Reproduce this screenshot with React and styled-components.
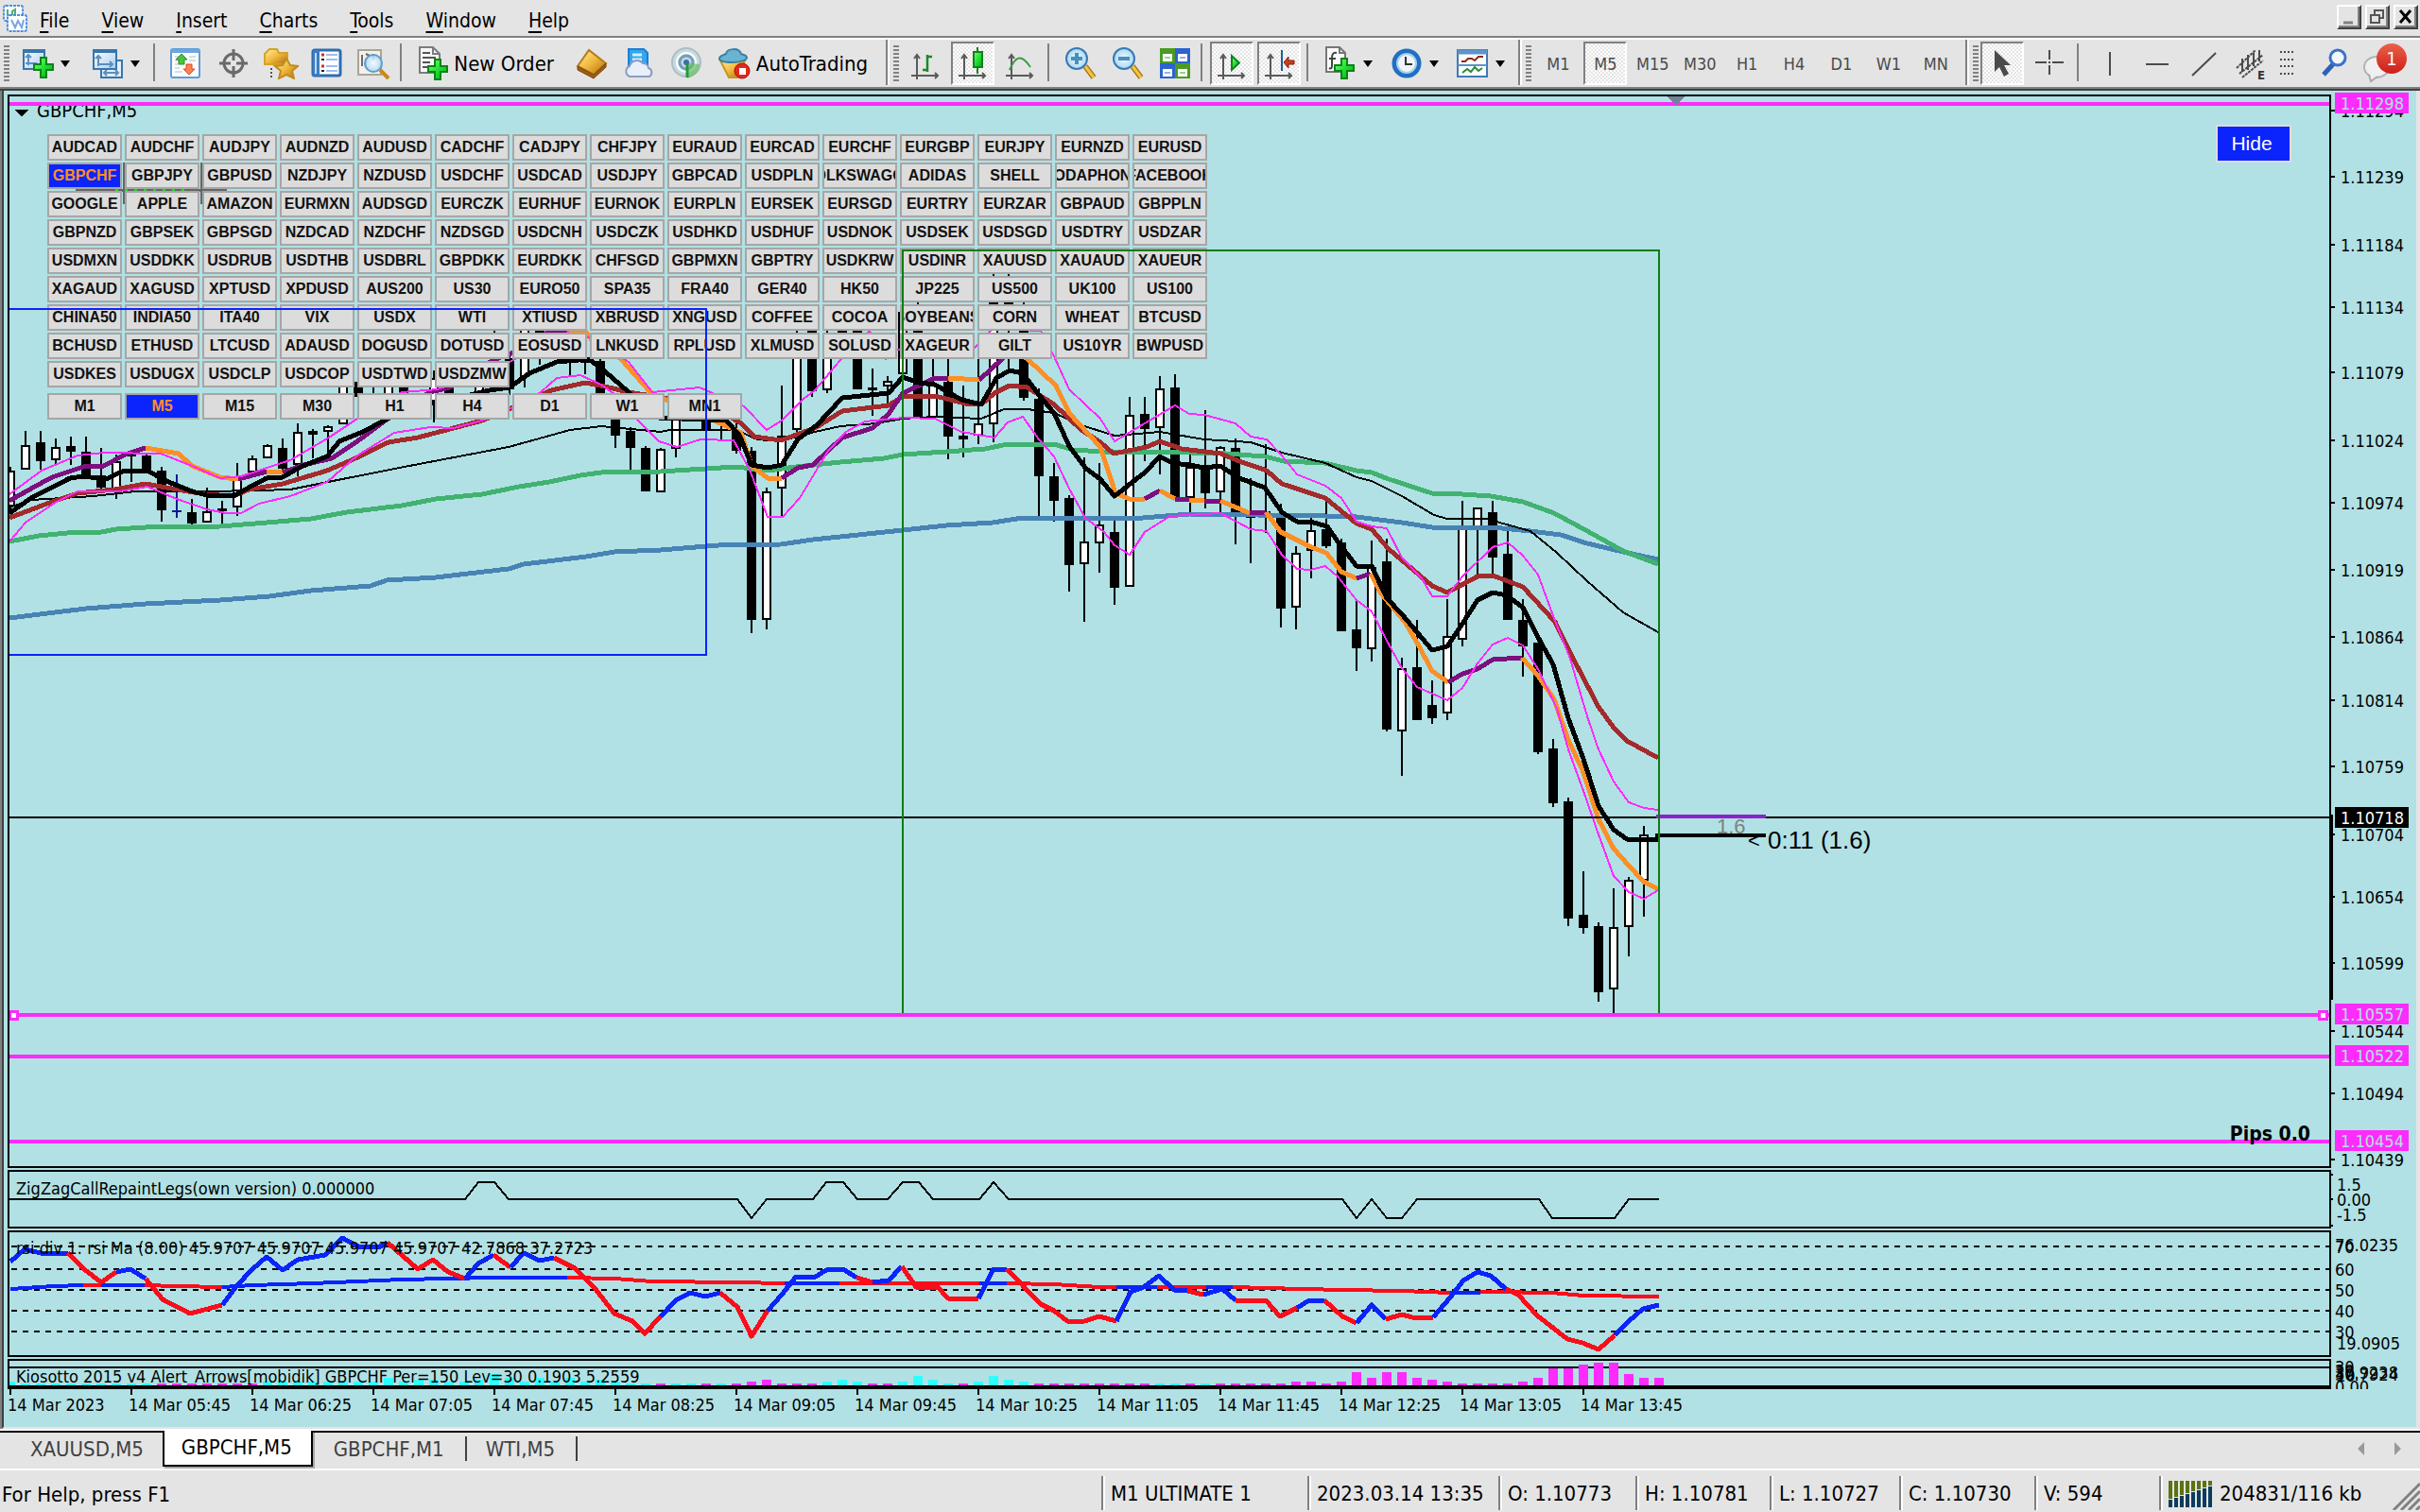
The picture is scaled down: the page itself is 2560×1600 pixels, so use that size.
import React from "react";
import styled, { createGlobalStyle, css } from "styled-components";

const C = {
  face: "#e4e4e4",
  shade: "#808080",
  dark: "#404040",
  chart: "#b1e1e4",
  magenta: "#fd2bfc",
  blue: "#0b24fb",
  cyan: "#2dffff",
  orange: "#fd8f25",
  purple: "#7d0f7f",
  brown: "#a32b2d",
  seagreen: "#41b270",
  steel: "#4883b5",
  green: "#107c12",
  red: "#fb0d1b",
};

const ui = `"DejaVu Sans Condensed", "DejaVu Sans", sans-serif`;
const arial = `"Liberation Sans", Arial, sans-serif`;

const Global = createGlobalStyle`
  * { box-sizing: border-box; }
  body { margin: 0; background: ${C.face}; font-family: ${ui}; color: #000; }
  button { font: inherit; color: inherit; border: 0; padding: 0; background: none; border-radius: 0; }
  svg { display: block; flex: none; }
`;

/* ---------- frame ---------- */
const Page = styled.div`
  display: flex;
  flex-direction: column;
  min-height: 100vh;
  overflow: hidden;
`;

const MenuBar = styled.nav`
  display: flex;
  align-items: center;
  height: 42px;
  padding: 0 2px;
  font-size: 21px;
  border-bottom: 2px solid #fff;
  box-shadow: inset 0 -2px 0 ${C.shade};
`;
const MenuList = styled.div`
  display: flex;
  gap: 34px;
  margin-left: 12px;
  padding-top: 4px;
  flex: 1;
`;
const MenuItem = styled.button`
  line-height: 30px;
  u { text-underline-offset: 4px; text-decoration-thickness: 2px; }
`;
const WindowButtons = styled.div`
  display: flex;
  gap: 4px;
  padding-bottom: 5px;
`;
const WindowButton = styled.button`
  width: 26px;
  height: 26px;
  display: grid;
  place-items: center;
  border: 2px solid;
  border-color: #fff ${C.dark} ${C.dark} #fff;
  box-shadow: inset -2px -2px 0 ${C.shade};
`;

/* ---------- toolbar ---------- */
const ToolBar = styled.div`
  display: flex;
  align-items: stretch;
  height: 54px;
  font-size: 22px;
  border-bottom: 2px solid ${C.dark};
  box-shadow: inset 0 -2px 0 ${C.shade};
  padding: 0 6px 2px 4px;
`;
const Grip = styled.span`
  width: 6px;
  margin: 6px ${(p) => p.$after || 6}px 6px 0;
  background: repeating-linear-gradient(${C.shade} 0 2px, transparent 2px 4px);
`;
const Sep = styled.span`
  width: 2px;
  margin: 4px 8px 6px 2px;
  background: ${C.shade};
`;
const Break = styled.span`
  width: 4px;
  margin: 0 4px 2px;
  background: linear-gradient(90deg, ${C.shade} 50%, #fff 50%);
`;
const Tool = styled.button`
  width: ${(p) => p.$w || 50}px;
  display: flex;
  align-items: center;
  justify-content: center;
  gap: 7px;
  white-space: nowrap;
`;
const LabelTool = styled(Tool)`
  width: ${(p) => p.$w}px;
  justify-content: flex-start;
  padding-left: 8px;
  gap: 5px;
`;
const pressed = css`
  border: 2px solid;
  border-color: ${C.shade} #fff #fff ${C.shade};
  background: repeating-conic-gradient(#fff 0 25%, ${C.face} 0 50%) 0 0 / 4px 4px;
`;
const Toggle = styled(Tool)`
  width: 46px;
  margin: 2px 4px 0 0;
  height: 46px;
  ${(p) => p.$on && pressed}
`;
const Period = styled(Toggle)`
  font-size: 18px;
  color: #4b4b4b;
`;
const Caret = styled.span`
  border: 5px solid transparent;
  border-top: 7px solid #000;
  border-bottom: 0;
`;
const RightTool = styled(Tool)`
  margin-left: auto;
`;

/* ---------- chart ---------- */
const ChartWindow = styled.main`
  flex: 1;
  display: flex;
  flex-direction: column;
  gap: 2px;
  background: ${C.chart};
  border-left: 2px solid ${C.dark};
  box-shadow: -2px 0 0 ${C.shade};
  margin-left: 2px;
  margin-right: 2px;
  padding: 4px 0 0 4px;
  border-bottom: 2px solid ${C.face};
  border-right: 2px solid ${C.face};
`;
const PaneRow = styled.section`
  display: flex;
  ${(p) => (p.$h ? `height: ${p.$h}px;` : "flex: 1 1 1136px; min-height: 0;")}
`;
const Plot = styled.div`
  position: relative;
  flex: 1;
  min-width: 0;
  overflow: hidden;
  border: 2px solid #000;
  border-bottom-width: ${(p) => p.$base || 2}px;
`;
const Scale = styled.svg`
  width: 90px;
  height: 100%;
  font: 18px ${ui};
  overflow: ${(p) => (p.$clip ? "hidden" : "visible")};
`;
const Canvas = styled.svg`
  width: 100%;
  height: 100%;
  font: 18px ${ui};
`;
const Overlay = styled(Canvas)`
  position: absolute;
  inset: 0;
  pointer-events: none;
`;
const TimeScale = styled.svg`
  width: 100%;
  height: 40px;
  margin-top: -2px;
  font: 18px ${ui};
`;
const SymbolPanel = styled.div`
  position: absolute;
  left: 40px;
  top: 40px;
  display: grid;
  grid-template-columns: repeat(15, 80px);
  grid-auto-rows: 28px;
  gap: 2px;
  font: bold 16px ${arial};
`;
const PeriodPanel = styled(SymbolPanel)`
  top: 314px;
`;
const SymbolButton = styled.button`
  display: flex;
  align-items: center;
  justify-content: center;
  overflow: hidden;
  white-space: nowrap;
  margin: 0 1px 0 0;
  border: 2px solid #a6a6a6;
  background: ${(p) => (p.$on ? C.blue : "#dcdcdc")};
  color: ${(p) => (p.$on ? C.orange : "#111")};
`;
const HideButton = styled.button`
  position: absolute;
  right: 40px;
  top: 30px;
  width: 80px;
  height: 40px;
  padding-right: 4px;
  border: 2px solid #dcdcdc;
  background: ${C.blue};
  color: #fff;
  font: 21px ${arial};
`;

/* ---------- bottom ---------- */
const TabBar = styled.div`
  display: flex;
  align-items: stretch;
  height: 44px;
  border-top: 2px solid #fff;
  border-bottom: 2px solid #fff;
  box-shadow: inset 0 2px 0 #000;
  font-size: 22px;
  padding: 0 16px 2px 2px;
`;
const Tab = styled.button`
  margin: 6px 0 6px 0;
  padding: 0 22px 0 ${(p) => p.$lead || 20}px;
  line-height: 28px;
  color: ${C.dark};
  border-right: ${(p) => (p.$line ? `2px solid ${C.dark}` : "0")};
`;
const FirstTab = styled(Tab)`
  padding-right: 20px;
`;
const ActiveTab = styled(Tab)`
  margin: 0;
  padding: 0 20px 0 18px;
  color: #000;
  background: #fff;
  border: 2px solid #000;
  border-top: 0;
  box-shadow: 2px 2px 0 #a8a8a8;
`;
const TabArrows = styled.div`
  display: flex;
  gap: 30px;
  align-items: center;
  margin-left: auto;
  padding-right: 4px;
`;
const StatusBar = styled.footer`
  display: flex;
  align-items: stretch;
  height: 44px;
  padding: 6px 0 2px 2px;
  font-size: 22px;
  line-height: 40px;
  white-space: nowrap;
`;
const Help = styled.span`
  flex: 1;
`;
const Cell = styled.span`
  width: ${(p) => p.$w}px;
  display: flex;
  align-items: center;
  gap: 8px;
  padding: 2px 0 0 8px;
  border-left: 2px solid ${C.shade};
  box-shadow: inset 2px 0 0 #fff;
`;
const Resize = styled.svg`
  margin-left: auto;
  align-self: flex-end;
`;

/* ---------- icons ---------- */
const Icon = ({ children, w = 34, h = 34, ...r }) => (
  <svg width={w} height={h} viewBox={`0 0 ${w} ${h}`} fill="none" aria-hidden="true" {...r}>
    {children}
  </svg>
);
const HiddenDefs = styled.svg`
  position: absolute;
`;
const Defs = () => (
  <HiddenDefs width="0" height="0" aria-hidden="true">
    <defs>
      <linearGradient id="gGreen" x1="0" y1="0" x2="1" y2="1">
        <stop offset="0" stopColor="#8dff7a" /><stop offset=".5" stopColor="#1fe032" /><stop offset="1" stopColor="#0aa51a" />
      </linearGradient>
      <linearGradient id="gGold" x1="0" y1="0" x2="1" y2="1">
        <stop offset="0" stopColor="#fff0a0" /><stop offset=".5" stopColor="#f0b93c" /><stop offset="1" stopColor="#a8690f" />
      </linearGradient>
      <linearGradient id="gBlue" x1="0" y1="0" x2="1" y2="1">
        <stop offset="0" stopColor="#fff" /><stop offset="1" stopColor="#a9cdee" />
      </linearGradient>
      <radialGradient id="gLens">
        <stop offset="0" stopColor="#f4fbff" /><stop offset="1" stopColor="#a6d8f5" />
      </radialGradient>
      <linearGradient id="gRed" x1="0" y1="0" x2="0" y2="1">
        <stop offset="0" stopColor="#ea6149" /><stop offset="1" stopColor="#cf1d17" />
      </linearGradient>
    </defs>
  </HiddenDefs>
);
const Plus = ({ x, y }) => (
  <path transform={`translate(${x} ${y})`} d="M8 1h6v7h7v6h-7v8H8v-8H1V8h7z" fill="url(#gGreen)" stroke="#0b8416" strokeWidth="2" />
);
const Axes = () => (
  <path d="M6 4v26M0 26h28M3 8l3-4 3 4M25 23l3 3-3 3" stroke="#5a5a5a" strokeWidth="2" />
);
const IcApp = () => (
  <Icon w={28} h={30}>
    <rect x="2" y="1" width="20" height="16" rx="2" fill="#f8fbff" stroke="#4f8fe0" strokeWidth="2" strokeDasharray="3 1" />
    <path d="M6 12V5m5 7V7l3-2v7" stroke="#4fae74" strokeWidth="2" />
    <rect x="6" y="11" width="20" height="17" rx="2" fill="#fff" stroke="#4f8fe0" strokeWidth="2" strokeDasharray="3 1" />
    <path d="M10 16l4 8 3-7 4 7 2-8" stroke="#7aa5e0" strokeWidth="2" />
  </Icon>
);
const IcNewChart = () => (
  <Icon>
    <rect x="2" y="3" width="22" height="20" fill="url(#gBlue)" stroke="#3776ae" strokeWidth="2" />
    <path d="M1 4h24" stroke="#3776ae" strokeWidth="4" />
    <path d="M7 9v10M4 11l3-3 3 3M4 17h12" stroke="#5d90bd" strokeWidth="2" />
    <Plus x={12} y={10} />
  </Icon>
);
const IcProfiles = () => (
  <Icon>
    <rect x="10" y="14" width="22" height="18" fill="#e3effa" stroke="#3776ae" strokeWidth="2" />
    <path d="M14 27h14m-12-3-3 3 3 3m9-6 3 3-3 3" stroke="#5d90bd" strokeWidth="2" />
    <rect x="2" y="3" width="24" height="20" fill="url(#gBlue)" stroke="#3776ae" strokeWidth="2" />
    <path d="M1 4h26" stroke="#3776ae" strokeWidth="4" />
    <path d="M7 9v11M4 12l3-3 3 3M6 18h16m-3-3 3 3-3 3" stroke="#5d90bd" strokeWidth="2" />
  </Icon>
);
const IcMarket = () => (
  <Icon>
    <rect x="1" y="2" width="30" height="30" rx="2" fill="#fbfdff" stroke="#5f9bd8" strokeWidth="2" />
    <path d="M1 4h30" stroke="#6aa6e2" strokeWidth="4" />
    <path d="M5 10h4m-4 4h4m11 0h7M5 18h4m11-8h7M5 26h8m-8-4h5" stroke="#d6dce6" strokeWidth="2" />
    <path d="M12 7l6 6h-3v5h-6v-5H6z" fill="#4ac23d" stroke="#2c8f22" />
    <path d="M20 29l-6-6h3v-5h6v5h3z" fill="#ff7f55" stroke="#d9491c" />
  </Icon>
);
const IcCross = () => (
  <Icon>
    <circle cx="17" cy="17" r="10" stroke="#6a6a6a" strokeWidth="3" />
    <path d="M17 2v12m0 6v12M2 17h12m6 0h12" stroke="#6a6a6a" strokeWidth="3" />
  </Icon>
);
const IcNavigator = () => (
  <Icon w={38}>
    <path d="M2 7l5-5h8l2 4h9v12H2z" fill="url(#gGold)" stroke="#d5a32b" strokeWidth="2" />
    <path d="M9 22v10" stroke="#555" strokeWidth="2" strokeDasharray="2 2" />
    <path d="M25 12l4 7 8 1-6 5 2 8-8-4-8 4 2-8-6-5 8-1z" fill="url(#gGold)" stroke="#c08c1c" strokeWidth="2" />
  </Icon>
);
const IcTerminal = () => (
  <Icon>
    <rect x="2" y="3" width="29" height="27" rx="2" fill="#fff" stroke="#2d6db2" strokeWidth="3" />
    <rect x="2" y="3" width="7" height="27" fill="#3d7cc0" />
    <path d="M5 6v22" stroke="#b8d8f4" strokeWidth="2" />
    <path d="M11 8h3m-3 12h3" stroke="#e0252c" strokeWidth="3" />
    <path d="M16 8h12M16 13h12M16 20h12M16 25h12" stroke="#9fbdf0" strokeWidth="2" />
    <path d="M11 13h3m-3 12h3" stroke="#222" strokeWidth="2" />
  </Icon>
);
const IcTester = () => (
  <Icon w={38}>
    <rect x="2" y="3" width="24" height="26" fill="#f3f1ea" stroke="#a8a595" strokeWidth="2" />
    <path d="M6 8v12m4-8v9m8-14v6m-8-6l4 2" stroke="#6c6c6c" strokeWidth="2" />
    <circle cx="18" cy="17" r="9" fill="url(#gLens)" fillOpacity=".85" stroke="#5e9bd0" strokeWidth="2" />
    <path d="M25 24l9 9" stroke="#c98a17" strokeWidth="4" />
  </Icon>
);
const IcOrder = () => (
  <Icon h={38}>
    <path d="M3 2h14l7 7v20H3z" fill="#f7f7f7" stroke="#7b7b7b" strokeWidth="2" />
    <path d="M17 2v7h7" stroke="#7b7b7b" strokeWidth="2" />
    <path d="M6 8h8M6 13h14M6 18h8M6 23h6" stroke="#555" strokeWidth="2" />
    <Plus x={11} y={14} />
  </Icon>
);
const IcMeta = () => (
  <Icon>
    <path d="M2 20L14 3l18 14-13 12z" fill="url(#gGold)" stroke="#b5791a" strokeWidth="2" />
    <path d="M2 20v4l17 9 13-12v-4L19 29z" fill="#9a5d12" stroke="#7d470a" />
  </Icon>
);
const IcCloud = () => (
  <Icon>
    <path d="M6 2h16l4 4v16H6z" fill="#35a6f0" stroke="#1c7fd0" strokeWidth="2" />
    <path d="M10 8h10M10 13h10" stroke="#d6f0ff" strokeWidth="3" />
    <path d="M7 31a6 6 0 010-11 8 8 0 0114-3 6 6 0 016 5 5 5 0 011 9z" fill="#e9effa" stroke="#8b9cc2" strokeWidth="2" />
  </Icon>
);
const IcSignal = () => (
  <Icon>
    <circle cx="17" cy="16" r="15" fill="#cbd9dc" stroke="#a9bfc6" strokeWidth="2" />
    <circle cx="17" cy="16" r="10" stroke="#fff" strokeWidth="2" />
    <circle cx="17" cy="16" r="7" stroke="#6f9fc0" strokeWidth="3" />
    <path d="M18 16v17c8-2 13-8 13-15" fill="#66bf63" fillOpacity=".7" />
    <circle cx="17" cy="16" r="3" fill="#3b6eae" />
    <path d="M18 18v14" stroke="#25983a" strokeWidth="3" />
  </Icon>
);
const IcAuto = () => (
  <Icon w={36}>
    <path d="M3 14h26l-8 18h-9z" fill="url(#gGold)" stroke="#c99424" strokeWidth="2" />
    <path d="M2 12c0-3 5-4 7-5 1-6 14-7 16 0 2 1 6 1 6 4s-8 5-15 5-14-1-14-4z" fill="#6cb2d4" stroke="#38819f" strokeWidth="2" />
    <circle cx="26" cy="25" r="8" fill="#df2a1d" stroke="#b21209" />
    <rect x="23" y="22" width="7" height="7" fill="#fff" />
  </Icon>
);
const IcBars = () => (
  <Icon>
    <g transform="translate(2 4)"><Axes /><path d="M17 4v18M17 6h5M12 20h5" stroke="#1a8a26" strokeWidth="2.5" /></g>
  </Icon>
);
const IcCandles = () => (
  <Icon>
    <g transform="translate(2 4)"><Axes /></g>
    <path d="M22 0v28" stroke="#11821c" strokeWidth="2" /><rect x="18" y="5" width="9" height="16" fill="url(#gGreen)" stroke="#11821c" strokeWidth="2" />
  </Icon>
);
const IcLine = () => (
  <Icon>
    <g transform="translate(2 4)"><Axes /><path d="M4 20c6-14 12-18 22-3" stroke="#3a9a40" strokeWidth="2" /></g>
  </Icon>
);
const IcZoom = ({ plus }) => (
  <Icon>
    <path d="M22 20l9 12" stroke="#a87616" strokeWidth="6" /><path d="M22 20l9 12" stroke="#f1c645" strokeWidth="3" />
    <circle cx="13" cy="12" r="11" fill="url(#gLens)" stroke="#3a78b5" strokeWidth="2" />
    <path d={plus ? "M13 6v12M7 12h12" : "M7 12h12"} stroke="#4a8fbd" strokeWidth="4" />
  </Icon>
);
const IcTile = () => (
  <Icon>
    {[[1, 1, "#4b9a26"], [17, 1, "#2c63cf"], [1, 17, "#2c63cf"], [17, 17, "#4b9a26"]].map(([x, y, f]) => (
      <g key={`${x}-${y}`}><rect x={x} y={y} width="16" height="16" fill={f} /><rect x={x + 3} y={y + 6} width="10" height="8" fill="#fff" /><path d={`M${x + 5} ${y + 10}h6`} stroke={f} strokeOpacity=".5" strokeWidth="2" /></g>
    ))}
  </Icon>
);
const IcShift = ({ auto }) => (
  <Icon>
    <g transform="translate(2 4)"><Axes /></g>
    {auto ? <path d="M17 9v15l8-7.500z" fill="url(#gGreen)" stroke="#11821c" strokeWidth="2" /> : <path d="M20 3v22" stroke="#1b5f96" strokeWidth="2" />}
    {!auto && <path d="M22 16l5-6v4h6v4h-6v4z" fill="#c6401a" stroke="#8b1f08" />}
  </Icon>
);
const IcIndicator = () => (
  <Icon h={38}>
    <path d="M2 2h14l6 6v20H2z" fill="#fcfcfc" stroke="#777" strokeWidth="2" />
    <path d="M16 2v6h6" stroke="#777" strokeWidth="2" />
    <path d="M13 8c-4-1-5 2-5 5v9c0 2-1 3-3 2M5 14h7" stroke="#444" strokeWidth="2" />
    <Plus x={10} y={13} />
  </Icon>
);
const IcClock = () => (
  <Icon>
    <circle cx="17" cy="17" r="13" fill="#eef5fb" stroke="#1f6fc4" strokeWidth="5" />
    <circle cx="17" cy="17" r="10" stroke="#a5cdec" strokeWidth="2" />
    <path d="M16 10v8h7" stroke="#333" strokeWidth="2" />
  </Icon>
);
const IcTemplate = () => (
  <Icon>
    <rect x="1" y="3" width="31" height="28" fill="#fff" stroke="#3b7ab8" strokeWidth="2" />
    <path d="M1 5h31" stroke="#5b95cc" strokeWidth="5" />
    <path d="M1 19h31" stroke="#5b95cc" strokeWidth="2" />
    <path d="M5 15h4l3-3h4l3 2 4-4h5" stroke="#8c2a12" strokeWidth="2" />
    <path d="M6 27l5-4 4 3 4-5 4 4 4-3" stroke="#2b8a33" strokeWidth="2" />
  </Icon>
);
const IcCursor = () => <Icon><path d="M9 3v23l5-5 5 10 5-3-5-9h7z" fill="#4b4b4b" /></Icon>;
const IcCrosshair = () => <Icon><path d="M17 3v10m0 6v10M2 16h12m6 0h12M16 16h2" stroke="#4b4b4b" strokeWidth="2" /></Icon>;
const IcV = () => <Icon><path d="M17 5v25" stroke="#4b4b4b" strokeWidth="2" /></Icon>;
const IcH = () => <Icon><path d="M5 18h24" stroke="#4b4b4b" strokeWidth="2" /></Icon>;
const IcTrend = () => <Icon><path d="M5 30L30 6" stroke="#4b4b4b" strokeWidth="2" /></Icon>;
const IcChannel = () => (
  <Icon>
    <path d="M2 22L22 3M5 28L30 8M8 32L30 14" stroke="#4b4b4b" strokeWidth="2" strokeDasharray="3 1" />
    <path d="M8 12v14M14 8v16M20 6v14M26 3v12" stroke="#4b4b4b" strokeWidth="2" />
    <text x="24" y="34" fontSize="13" fontWeight="bold" fill="#333">E</text>
  </Icon>
);
const IcFibo = () => <Icon><path d="M3 5h16M3 13h16M3 20h16M3 28h16" stroke="#4b4b4b" strokeWidth="2" strokeDasharray="2 2" /></Icon>;
const IcSearch = () => (
  <Icon w={28}>
    <path d="M12 18L2 29" stroke="#2b62b8" strokeWidth="5" />
    <circle cx="17" cy="11" r="8" fill="#f2f7ff" stroke="#3b72c8" strokeWidth="3" />
  </Icon>
);
const IcBell = () => (
  <Icon w={48} h={44}>
    <ellipse cx="14" cy="26" rx="13" ry="11" fill="#f0f0f2" stroke="#b3b3b3" strokeWidth="2" />
    <path d="M6 34l2 7 7-5" fill="#eee" stroke="#aaa" strokeWidth="2" />
    <circle cx="30" cy="17" r="16" fill="url(#gRed)" />
    <text x="30" y="24" textAnchor="middle" fontSize="20" fill="#fff">1</text>
  </Icon>
);

/* ---------- chart data ---------- */
// x of a bar on the time axis
const bx = (i) => 11 + 16 * i;

// [bar, high, body top, body bottom, low, bull?]
const candles = [
  [0, 494, 498, 536, 540, 1], [1, 456, 471, 497, 497, 1], [2, 456, 468, 488, 497, 0], [3, 464, 473, 487, 492, 1],
  [4, 462, 472, 478, 492, 0], [5, 462, 478, 503, 504, 0], [6, 474, 503, 516, 518, 0], [7, 481, 488, 519, 528, 1],
  [8, 482, 481, 483, 510, 0], [9, 480, 482, 499, 499, 0], [10, 494, 498, 540, 552, 0], [12, 528, 542, 554, 556, 0],
  [13, 516, 541, 553, 553, 1], [14, 530, 538, 541, 554, 0], [15, 490, 504, 537, 546, 1], [16, 482, 485, 500, 502, 1],
  [17, 470, 471, 485, 485, 1], [18, 464, 474, 496, 500, 0], [19, 448, 457, 492, 504, 1], [20, 454, 456, 460, 485, 0],
  [21, 450, 451, 457, 480, 1], [22, 400, 404, 449, 449, 1], [23, 400, 404, 420, 427, 0], [24, 404, 420, 424, 428, 0],
  [25, 395, 398, 430, 430, 1], [26, 402, 405, 430, 430, 0], [28, 392, 400, 425, 447, 1], [29, 402, 405, 430, 430, 0],
  [31, 390, 396, 430, 430, 1], [32, 348, 380, 384, 400, 0], [33, 375, 379, 412, 418, 0], [34, 340, 346, 399, 410, 1],
  [35, 340, 350, 372, 386, 0], [37, 350, 355, 372, 398, 0], [38, 352, 380, 384, 396, 0], [39, 378, 382, 430, 436, 0],
  [40, 420, 426, 461, 474, 0], [41, 452, 456, 474, 498, 0], [42, 472, 474, 520, 520, 0], [43, 474, 475, 521, 521, 1],
  [44, 430, 440, 475, 484, 1], [46, 428, 436, 454, 454, 0], [47, 430, 444, 446, 467, 0], [48, 440, 455, 477, 480, 0],
  [49, 473, 477, 656, 670, 0], [50, 516, 520, 656, 666, 1], [51, 408, 461, 517, 547, 1], [52, 340, 360, 455, 458, 1],
  [53, 340, 350, 414, 420, 0], [54, 345, 360, 413, 416, 1], [55, 340, 350, 352, 360, 0], [56, 330, 350, 412, 412, 0],
  [57, 390, 410, 413, 440, 0], [58, 398, 403, 409, 430, 1], [59, 320, 330, 396, 398, 1], [60, 318, 350, 443, 443, 0],
  [61, 360, 407, 442, 442, 1], [62, 370, 404, 462, 486, 0], [63, 408, 461, 465, 484, 1], [64, 370, 448, 461, 470, 1],
  [65, 290, 320, 449, 468, 1], [66, 290, 320, 324, 392, 0], [67, 320, 340, 421, 424, 0], [68, 411, 422, 504, 546, 0],
  [69, 490, 504, 530, 552, 0], [70, 524, 527, 598, 626, 0], [71, 484, 573, 597, 658, 1], [72, 490, 555, 575, 606, 1],
  [73, 550, 563, 622, 640, 0], [74, 420, 439, 621, 621, 1], [75, 420, 438, 454, 488, 0], [76, 398, 411, 453, 502, 1],
  [77, 396, 410, 527, 527, 0], [78, 480, 494, 527, 542, 1], [79, 434, 494, 522, 538, 0], [80, 472, 473, 521, 543, 1],
  [81, 464, 474, 547, 576, 0], [82, 506, 546, 548, 596, 0], [83, 470, 541, 543, 564, 0], [84, 533, 547, 644, 664, 0],
  [85, 578, 585, 643, 666, 1], [86, 548, 561, 583, 612, 1], [87, 530, 560, 578, 580, 0], [88, 570, 574, 668, 668, 0],
  [89, 636, 666, 686, 710, 0], [90, 572, 600, 687, 700, 1], [91, 570, 594, 772, 774, 0], [92, 696, 707, 774, 821, 1],
  [93, 656, 706, 762, 762, 0], [94, 720, 746, 760, 766, 0], [95, 634, 673, 755, 762, 1], [96, 530, 558, 677, 684, 1],
  [97, 537, 537, 561, 608, 1], [98, 530, 542, 590, 608, 0], [99, 562, 586, 656, 656, 0], [100, 634, 656, 684, 716, 0],
  [101, 680, 680, 796, 798, 0], [102, 782, 792, 850, 854, 0], [103, 844, 848, 972, 980, 0], [104, 922, 968, 982, 988, 0],
  [105, 976, 980, 1050, 1060, 0], [106, 940, 981, 1047, 1072, 1], [107, 928, 931, 981, 1012, 1], [108, 874, 883, 932, 970, 1],
];

const greenMa = "10,573 41,567 71,564 107,563 123,560 154,558 233,557 282,553 329,549 367,542 425,535 461,528 510,523 549,515 581,510 614,503 636,500 699,499 730,497 779,494 812,498 842,494 889,489 935,485 955,481 1001,478 1042,475 1066,470 1115,470 1135,476 1184,479 1225,478 1297,480 1338,483 1358,488 1401,490 1435,498 1451,500 1469,507 1515,522 1547,523 1577,525 1611,531 1644,543 1681,563 1717,583 1754,597";
const steelMa = "10,654 58,648 91,644 154,639 233,635 285,631 329,625 392,620 409,614 461,611 538,602 554,597 620,589 650,584 699,582 760,577 826,576 860,571 889,568 955,561 1001,556 1050,553 1082,548 1209,548 1258,544 1402,546 1435,547 1483,553 1515,558 1579,558 1619,562 1651,566 1679,575 1717,584 1754,592";
const blackMa = "10,543 33,527 74,506 88,504 112,507 129,499 156,498 176,509 203,520 219,524 247,525 263,516 282,506 299,505 318,494 346,483 359,467 384,457 406,445 440,430 480,422 518,413 539,410 560,395 589,383 623,380 640,393 665,415 697,442 768,445 782,460 795,492 812,495 827,492 844,465 864,450 891,421 940,416 955,399 972,405 989,407 1017,423 1038,428 1054,400 1068,392 1082,395 1099,418 1115,437 1131,472 1148,495 1164,507 1179,525 1211,500 1227,483 1240,490 1258,492 1274,495 1291,493 1311,506 1338,516 1356,542 1372,552 1386,552 1404,557 1415,573 1435,599 1451,599 1467,633 1483,650 1515,688 1531,684 1547,660 1563,635 1579,627 1594,630 1611,643 1629,678 1643,703 1659,760 1675,803 1691,853 1707,878 1721,888 1754,888";
const brownMa = "10,548 55,531 82,522 121,518 154,512 176,516 217,523 247,525 263,518 299,512 346,498 376,485 411,468 442,463 510,445 550,428 583,413 619,405 640,409 665,415 720,424 760,434 784,448 798,462 826,466 862,453 891,435 940,429 956,419 989,419 1021,427 1038,428 1052,416 1068,408 1087,410 1115,428 1144,455 1164,468 1178,480 1213,473 1227,467 1250,475 1291,480 1311,488 1340,498 1356,512 1402,527 1435,554 1451,560 1469,581 1515,620 1531,627 1563,610 1579,609 1611,621 1645,658 1659,687 1691,748 1707,770 1721,784 1754,802";
const thinMa = "10,537 33,529 99,525 143,520 217,520 274,519 307,518 362,507 433,493 538,473 603,455 636,451 699,457 708,455 779,455 801,465 825,467 862,457 889,451 927,448 955,443 989,441 1038,443 1062,433 1087,433 1115,437 1144,450 1179,461 1227,457 1274,465 1323,468 1356,479 1402,490 1435,505 1451,509 1483,525 1517,545 1531,549 1572,549 1619,562 1647,585 1679,615 1717,648 1754,669";
const bandUp = "10,523 44,498 82,482 110,479 170,480 203,493 233,506 255,504 307,487 348,463 378,443 425,415 463,412 541,382 600,352 623,357 665,383 690,415 740,410 787,430 811,455 827,445 850,422 862,413 889,381 920,350 937,380 949,370 1031,368 1050,348 1101,350 1115,377 1131,412 1164,443 1179,467 1211,448 1243,429 1258,438 1274,439 1307,448 1323,462 1340,465 1356,482 1372,502 1402,514 1419,527 1435,552 1451,557 1467,559 1483,590 1504,612 1515,631 1531,631 1547,610 1579,579 1595,574 1611,588 1627,608 1645,657 1661,697 1679,758 1691,793 1707,827 1723,849 1739,855 1754,857";
const bandLow = "10,573 27,553 58,532 82,520 126,520 156,515 187,528 219,539 239,543 255,543 274,533 307,525 346,510 378,482 417,458 455,452 480,453 510,445 545,430 572,415 589,400 614,397 636,407 650,417 675,445 697,467 716,473 741,465 776,466 793,497 812,547 828,547 846,527 876,477 895,457 915,446 956,442 989,443 1017,457 1052,463 1066,447 1082,441 1099,465 1115,483 1131,517 1148,548 1168,563 1179,577 1195,587 1211,563 1238,546 1291,543 1323,560 1340,562 1356,587 1372,602 1386,603 1402,599 1415,610 1435,635 1451,647 1467,678 1483,707 1499,727 1531,741 1547,728 1563,702 1579,682 1595,675 1611,683 1627,708 1647,750 1659,793 1675,837 1691,883 1707,927 1723,944 1739,951 1754,942";

const P = C.purple;
const O = C.orange;
const hull = [
  [P, "10,530 33,517 55,505 91,493 110,493 132,481 154,474"],
  [O, "154,474 189,480 203,493 233,505 252,507"],
  [P, "252,507 282,499"],
  [O, "282,499 299,500"],
  [P, "299,500 321,492 351,485 378,467 409,444 455,415 476,410 522,381 543,373 583,350 600,350"],
  [O, "600,350 619,350 626,360 657,380 688,415 730,435 760,447 784,458 795,493 812,506 827,506"],
  [P, "827,506 844,495 860,492 891,463 923,453 940,438 955,416 989,400 1003,400"],
  [O, "1003,400 1036,402"],
  [P, "1036,402 1060,380 1070,368"],
  [O, "1070,368 1087,380 1117,408 1131,437 1164,473 1180,522 1195,528 1211,528"],
  [P, "1211,528 1227,519"],
  [O, "1227,519 1243,528"],
  [P, "1243,528 1258,529"],
  [O, "1258,529 1274,530"],
  [P, "1274,530 1291,530"],
  [O, "1291,530 1322,543"],
  [P, "1322,543 1339,542"],
  [O, "1339,542 1355,563 1387,579 1403,585 1419,605 1435,612"],
  [P, "1435,612 1450,607"],
  [O, "1450,607 1461,628 1486,658 1499,680 1515,710 1532,722"],
  [P, "1532,722 1547,713 1563,708 1579,698 1610,696"],
  [O, "1610,696 1627,715 1644,740 1659,783 1675,817 1691,867 1707,898 1723,916 1739,933 1754,941"],
];

const B = C.blue;
const R = C.red;
const rsi = [
  [B, "11,1335 26,1322 43,1326 72,1326"],
  [R, "72,1326 89,1343 107,1357 123,1346"],
  [B, "123,1346 138,1343 154,1353"],
  [R, "154,1353 172,1375 201,1390 235,1381"],
  [B, "235,1381 251,1360 267,1343 282,1330 299,1344 315,1333 344,1328 362,1310 379,1319 400,1320 410,1315"],
  [R, "410,1315 442,1343 458,1333 474,1346 492,1353"],
  [B, "492,1353 506,1337 522,1328"],
  [R, "522,1328 540,1341"],
  [B, "540,1341 554,1326 571,1334 586,1331"],
  [R, "586,1331 608,1342 629,1363 650,1390 669,1398 682,1411 699,1393"],
  [B, "699,1393 715,1376 730,1368 746,1372 762,1368"],
  [R, "762,1368 780,1383 795,1414 812,1387"],
  [B, "812,1387 827,1370 842,1351 861,1352 874,1344 892,1343 906,1352"],
  [R, "906,1352 923,1357"],
  [B, "923,1357 940,1355 954,1340"],
  [R, "954,1340 969,1362 992,1362 1003,1374 1035,1374"],
  [B, "1035,1374 1051,1343 1065,1343"],
  [R, "1065,1343 1101,1380 1115,1387 1129,1398 1147,1398 1163,1393 1181,1398"],
  [B, "1181,1398 1196,1367 1210,1362 1226,1350 1242,1365 1256,1366"],
  [R, "1256,1366 1273,1370"],
  [B, "1273,1370 1293,1364 1307,1376"],
  [R, "1307,1376 1339,1376 1354,1393 1372,1384"],
  [B, "1372,1384 1385,1376 1401,1376"],
  [R, "1401,1376 1420,1393 1435,1400"],
  [B, "1435,1400 1451,1381 1466,1396"],
  [R, "1466,1396 1483,1391 1494,1394 1516,1394"],
  [B, "1516,1394 1534,1373 1548,1355 1563,1346 1577,1350 1593,1364"],
  [R, "1593,1364 1606,1370 1626,1392 1658,1417 1674,1421 1691,1428 1708,1413"],
  [B, "1708,1413 1723,1398 1738,1385 1755,1381"],
];
const slow = [
  [B, "11,1364 57,1361 88,1360"], [R, "88,1360 107,1360"], [B, "107,1360 153,1360"], [R, "153,1360 187,1361 235,1362"],
  [B, "235,1362 267,1360 330,1358 378,1356 425,1354 522,1352 600,1352"], [R, "600,1352 650,1353 690,1356 779,1357 830,1358"],
  [B, "830,1358 888,1358"], [R, "888,1358 1036,1358"], [B, "1036,1358 1065,1358"], [R, "1065,1358 1115,1359 1163,1362 1181,1362"],
  [B, "1181,1362 1224,1362"], [R, "1224,1362 1276,1362"], [B, "1276,1362 1304,1362"],
  [R, "1304,1362 1339,1363 1420,1365 1483,1366 1534,1368"], [B, "1534,1368 1566,1368"], [R, "1566,1367 1577,1367 1642,1368 1675,1371 1755,1372"],
];
const zigzag = "10,1269 492,1269 506,1251 523,1251 538,1269 780,1269 795,1289 811,1269 860,1269 874,1251 892,1251 907,1269 939,1269 955,1251 972,1251 987,1269 1036,1269 1051,1251 1067,1269 1420,1269 1435,1289 1451,1269 1467,1289 1483,1289 1499,1269 1628,1269 1642,1289 1708,1289 1723,1269 1755,1269";

// height of each volume bar; negative values are drawn in cyan
const volume = [
  -4, -2, -2, -2, -2, -2, -2, -2, -2, -2, 2, 2, 2, 2, 2, 2, 2, -4, -4, -4, -4, -4, -4, -4, -4, -8, -4, -6, -6, -4, -4, -6,
  -12, -8, -4, -8, -4, -8, -4, -6, -4, -2, -2, 2, -2, -2, 2, -2, 2, 4, 6, 2, 2, 2, -4, -6, -4, 2, 2, -4, -10, -6, -2, 2, -4,
  -10, -6, -4, 2, 2, 2, 2, 2, 2, 2, 2, -2, -2, 2, -2, 2, 2, 2, 2, 2, 4, 4, 2, 4, 14, 8, 14, 14, 8, 6, 4, 2, 2, 2, 2, 4, 8,
  18, 18, 22, 24, 24, 12, 8, 8,
];

const prices = [
  ["1.11294", 117], ["1.11239", 187], ["1.11184", 259], ["1.11134", 325], ["1.11079", 394], ["1.11024", 466],
  ["1.10974", 532], ["1.10919", 603], ["1.10864", 674], ["1.10814", 741], ["1.10759", 811], ["1.10704", 883],
  ["1.10654", 949], ["1.10599", 1019], ["1.10544", 1091], ["1.10494", 1157], ["1.10439", 1227],
];
const tags = [
  ["1.11298", 109, C.magenta, C.chart], ["1.10718", 865, "#000", "#fff"], ["1.10557", 1073, C.magenta, C.chart],
  ["1.10522", 1117, C.magenta, C.chart], ["1.10454", 1207, C.magenta, C.chart],
];
const times = ["2023", "05:45", "06:25", "07:05", "07:45", "08:25", "09:05", "09:45", "10:25", "11:05", "11:45", "12:25", "13:05", "13:45"];

const symbols = `AUDCAD AUDCHF AUDJPY AUDNZD AUDUSD CADCHF CADJPY CHFJPY EURAUD EURCAD EURCHF EURGBP EURJPY EURNZD EURUSD
GBPCHF GBPJPY GBPUSD NZDJPY NZDUSD USDCHF USDCAD USDJPY GBPCAD USDPLN VOLKSWAGON ADIDAS SHELL VODAPHONE FACEBOOK
GOOGLE APPLE AMAZON EURMXN AUDSGD EURCZK EURHUF EURNOK EURPLN EURSEK EURSGD EURTRY EURZAR GBPAUD GBPPLN
GBPNZD GBPSEK GBPSGD NZDCAD NZDCHF NZDSGD USDCNH USDCZK USDHKD USDHUF USDNOK USDSEK USDSGD USDTRY USDZAR
USDMXN USDDKK USDRUB USDTHB USDBRL GBPDKK EURDKK CHFSGD GBPMXN GBPTRY USDKRW USDINR XAUUSD XAUAUD XAUEUR
XAGAUD XAGUSD XPTUSD XPDUSD AUS200 US30 EURO50 SPA35 FRA40 GER40 HK50 JP225 US500 UK100 US100
CHINA50 INDIA50 ITA40 VIX USDX WTI XTIUSD XBRUSD XNGUSD COFFEE COCOA SOYBEANS CORN WHEAT BTCUSD
BCHUSD ETHUSD LTCUSD ADAUSD DOGUSD DOTUSD EOSUSD LNKUSD RPLUSD XLMUSD SOLUSD XAGEUR GILT US10YR BWPUSD
USDKES USDUGX USDCLP USDCOP USDTWD USDZMW`.split(/\s+/);
const panelPeriods = ["M1", "M5", "M15", "M30", "H1", "H4", "D1", "W1", "MN1"];

/* ---------- chart parts ---------- */
const Poly = ({ points, color, width }) => (
  <polyline points={points} fill="none" stroke={color} strokeWidth={width} strokeLinejoin="round" />
);
const Candle = ({ data: [i, high, top, bottom, low, bull] }) => {
  const x = bx(i);
  return (
    <g>
      <rect x={x - 1} y={high} width="2" height={low - high} fill="#000" />
      {bull ? (
        <rect x={x - 4} y={top + 1} width="8" height={Math.max(bottom - top - 2, 2)} fill="#fff" stroke="#000" strokeWidth="2" />
      ) : (
        <rect x={x - 5} y={top} width="10" height={bottom - top} fill="#000" />
      )}
    </g>
  );
};
const Level = ({ y, color = C.magenta, width = 4 }) => (
  <rect x="0" y={y} width="100%" height={width} fill={color} />
);

const MainPane = () => (
  <PaneRow>
    <Plot>
      <Canvas shapeRendering="crispEdges">
        <g transform="translate(-10 -102)">
          <path d="M16 116h14l-7 8z" fill="#000" />
          <text x="39" y="124" fontSize="20">GBPCHF,M5</text>
          <path d="M80 201h160M131 172v44M213 172v44" stroke="#666" strokeWidth="3" />
          <path d="M122 201h76" stroke="#1ee01e" strokeWidth="2" strokeDasharray="3 7" />
          {candles.map((c) => <Candle key={c[0]} data={c} />)}
          <path d="M187 502v46M182 541h10" stroke="#0b1a8c" strokeWidth="2" />
          <Poly points={steelMa} color={C.steel} width="5" />
          <Poly points={greenMa} color={C.seagreen} width="5" />
          <Poly points={thinMa} color="#000" width="2" />
          <Poly points={brownMa} color={C.brown} width="5" />
          {hull.map(([c, p]) => <Poly key={p} points={p} color={c} width="5" />)}
          <Poly points={blackMa} color="#000" width="5" />
          <Poly points={bandUp} color={C.magenta} width="2" />
          <Poly points={bandLow} color={C.magenta} width="2" />
          <text x="1816" y="882" fontSize="22" fontFamily={arial} fill="#808080">1.6</text>
          <text x="1849" y="897" fontSize="22" fontFamily={arial}>&lt;</text>
          <text x="1870" y="898" fontSize="26" fontFamily={arial}>0:11 (1.6)</text>
        </g>
        <Level y={6} />
        <Level y={762} color="#000" width={2} />
        <Level y={970} />
        <Level y={1014} />
        <Level y={1104} />
        <g transform="translate(-10 -102)">
          <path d="M1764 102h18l-9 10z" fill="#728396" />
          <path d="M1752 864h116" stroke="#8a22cc" strokeWidth="4" />
          <path d="M1751 884h117" stroke="#000" strokeWidth="4" />
          <rect x="10" y="1070" width="8" height="8" fill="#fff" stroke={C.magenta} strokeWidth="3" />
        </g>
        <svg x="100%" overflow="visible">
          <rect x="-11" y="968" width="8" height="8" fill="#fff" stroke={C.magenta} strokeWidth="3" />
          <text x="-20" y="1105" textAnchor="end" fontSize="21" fontWeight="bold">Pips 0.0</text>
        </svg>
      </Canvas>
      <SymbolPanel>
        {symbols.map((s) => (
          <SymbolButton key={s} $on={s === "GBPCHF"}><span>{s}</span></SymbolButton>
        ))}
      </SymbolPanel>
      <PeriodPanel>
        {panelPeriods.map((s) => (
          <SymbolButton key={s} $on={s === "M5"}><span>{s}</span></SymbolButton>
        ))}
      </PeriodPanel>
      <Overlay shapeRendering="crispEdges">
        <g transform="translate(-10 -102)" fill="none" strokeWidth="2">
          <path d="M10 327h737v366H10" stroke={C.blue} />
          <path d="M955 1072V265h800v807" stroke={C.green} />
        </g>
      </Overlay>
      <HideButton>Hide</HideButton>
    </Plot>
    <Scale>
      <g transform="translate(0 -100)">
        {prices.map(([t, y]) => (
          <g key={t}>
            <path d={`M0 ${y}h4`} stroke="#000" strokeWidth="2" />
            <text x="10" y={y + 7}>{t}</text>
          </g>
        ))}
        <rect x="-2" y="862" width="4" height="196" fill="#000" />
        {tags.map(([t, y, bg, fg]) => (
          <g key={t}>
            <rect x="4" y={y - 11} width="78" height="22" fill={bg} />
            <text x="10" y={y + 7} fill={fg}>{t}</text>
          </g>
        ))}
      </g>
    </Scale>
  </PaneRow>
);

const ZigZagPane = () => (
  <PaneRow $h={62}>
    <Plot>
      <Canvas shapeRendering="crispEdges">
        <g transform="translate(-10 -1240)">
          <text x="17" y="1264">ZigZagCallRepaintLegs(own version) 0.000000</text>
          <Poly points={zigzag} color="#000" width="2" />
        </g>
      </Canvas>
    </Plot>
    <Scale>
      <g transform="translate(0 -1238)">
        <path d="M0 1243h2M0 1269h2M0 1297h2" stroke="#000" strokeWidth="2" />
        <text x="6" y="1260">1.5</text>
        <text x="6" y="1276">0.00</text>
        <text x="6" y="1292">-1.5</text>
      </g>
    </Scale>
  </PaneRow>
);

const RsiPane = () => (
  <PaneRow $h={134}>
    <Plot>
      <Canvas shapeRendering="crispEdges">
        {[15, 39, 61, 83, 105].map((y) => (
          <line key={y} x1="2" x2="100%" y1={y} y2={y} stroke="#000" strokeWidth="2" strokeDasharray="6 6" />
        ))}
        <g transform="translate(-10 -1304)">
          {slow.map(([c, p]) => <Poly key={p} points={p} color={c} width="4" />)}
          {rsi.map(([c, p]) => <Poly key={p} points={p} color={c} width="5" />)}
          <text x="17" y="1327">rsi div 1: rsi Ma (8.00) 45.9707 45.9707 45.9707 45.9707 42.7868 37.2723</text>
        </g>
      </Canvas>
    </Plot>
    <Scale>
      <g transform="translate(0 -1302)">
        <text x="4" y="1324">76.0235</text>
        <text x="4" y="1326">70</text>
        <text x="4" y="1350">60</text>
        <text x="4" y="1372">50</text>
        <text x="4" y="1394">40</text>
        <text x="4" y="1416">30</text>
        <text x="6" y="1428">19.0905</text>
      </g>
    </Scale>
  </PaneRow>
);

const VolumePane = () => (
  <PaneRow $h={32}>
    <Plot $base={4}>
      <Canvas shapeRendering="crispEdges">
        <Level y={6} color="#000" width={2} />
        <g transform="translate(-10 -1440)">
          {volume.map((v, i) => (
            <rect key={i} x={bx(i) - 5} y={1466 - Math.abs(v)} width="10" height={Math.abs(v)} fill={v < 0 ? C.cyan : C.magenta} />
          ))}
          <text x="17" y="1463">Kiosotto 2015 v4 Alert_Arrows[mobidik] GBPCHF Per=150 Lev=30 0.1903 5.2559</text>
        </g>
      </Canvas>
    </Plot>
    <Scale $clip>
      <g transform="translate(0 -1438)">
        <text x="4" y="1453">30</text>
        <text x="4" y="1457">20</text>
        <text x="4" y="1461">30.7924</text>
        <text x="4" y="1459">37.9238</text>
        <text x="5" y="1462">10</text>
        <text x="4" y="1474">0.00</text>
      </g>
    </Scale>
  </PaneRow>
);

/* ---------- app ---------- */
const menus = ["File", "View", "Insert", "Charts", "Tools", "Window", "Help"];
const periods = ["M1", "M5", "M15", "M30", "H1", "H4", "D1", "W1", "MN"];

export default function App() {
  return (
    <Page>
      <Global />
      <Defs />
      <MenuBar>
        <IcApp />
        <MenuList>
          {menus.map((m) => (
            <MenuItem key={m}><u>{m[0]}</u>{m.slice(1)}</MenuItem>
          ))}
        </MenuList>
        <WindowButtons>
          <WindowButton aria-label="Minimize"><Icon w={18} h={18}><path d="M3 15h10" stroke={C.shade} strokeWidth="3" /></Icon></WindowButton>
          <WindowButton aria-label="Restore"><Icon w={18} h={18}><path d="M6 6V2h9v8h-4M2 7h9v8H2z" stroke="#555" strokeWidth="2" /></Icon></WindowButton>
          <WindowButton aria-label="Close"><Icon w={18} h={18}><path d="M3 2l11 13M14 2L3 15" stroke="#000" strokeWidth="3" /></Icon></WindowButton>
        </WindowButtons>
      </MenuBar>

      <ToolBar>
        <Grip $after={2} />
        <Tool $w={74} aria-label="New chart"><IcNewChart /><Caret /></Tool>
        <Tool $w={74} aria-label="Profiles"><IcProfiles /><Caret /></Tool>
        <Sep />
        <Tool aria-label="Market watch"><IcMarket /></Tool>
        <Tool aria-label="Data window"><IcCross /></Tool>
        <Tool aria-label="Navigator"><IcNavigator /></Tool>
        <Tool aria-label="Terminal"><IcTerminal /></Tool>
        <Tool aria-label="Strategy tester"><IcTester /></Tool>
        <Sep />
        <LabelTool $w={168}><IcOrder />New Order</LabelTool>
        <Tool aria-label="MetaEditor"><IcMeta /></Tool>
        <Tool aria-label="Virtual hosting"><IcCloud /></Tool>
        <Tool aria-label="Signals"><IcSignal /></Tool>
        <LabelTool $w={182}><IcAuto />AutoTrading</LabelTool>
        <Break />
        <Grip />
        <Toggle aria-label="Bar chart"><IcBars /></Toggle>
        <Toggle $on aria-label="Candlesticks"><IcCandles /></Toggle>
        <Toggle aria-label="Line chart"><IcLine /></Toggle>
        <Sep />
        <Tool aria-label="Zoom in"><IcZoom plus /></Tool>
        <Tool aria-label="Zoom out"><IcZoom /></Tool>
        <Tool aria-label="Tile windows"><IcTile /></Tool>
        <Sep />
        <Toggle $on aria-label="Auto scroll"><IcShift auto /></Toggle>
        <Toggle $on aria-label="Chart shift"><IcShift /></Toggle>
        <Sep />
        <Tool $w={70} aria-label="Indicators"><IcIndicator /><Caret /></Tool>
        <Tool $w={70} aria-label="Periods"><IcClock /><Caret /></Tool>
        <Tool $w={70} aria-label="Templates"><IcTemplate /><Caret /></Tool>
        <Break />
        <Grip />
        {periods.map((p) => <Period key={p} $on={p === "M5"}>{p}</Period>)}
        <Break />
        <Grip $after={2} />
        <Toggle $on aria-label="Cursor"><IcCursor /></Toggle>
        <Toggle aria-label="Crosshair"><IcCrosshair /></Toggle>
        <Sep />
        <Tool aria-label="Vertical line"><IcV /></Tool>
        <Tool aria-label="Horizontal line"><IcH /></Tool>
        <Tool aria-label="Trendline"><IcTrend /></Tool>
        <Tool aria-label="Equidistant channel"><IcChannel /></Tool>
        <Tool $w={40} aria-label="Fibonacci"><IcFibo /></Tool>
        <RightTool $w={48} aria-label="Search"><IcSearch /></RightTool>
        <Tool $w={60} aria-label="Messages"><IcBell /></Tool>
      </ToolBar>

      <ChartWindow>
        <MainPane />
        <ZigZagPane />
        <RsiPane />
        <VolumePane />
        <TimeScale>
          {times.map((t, k) => (
            <g key={t}>
              <path d={`M${3 + 128 * k} 0v6`} stroke="#000" strokeWidth="2" />
              <text x={128 * k} y="23">14 Mar {t}</text>
            </g>
          ))}
        </TimeScale>
      </ChartWindow>

      <TabBar>
        <FirstTab $lead={30}>XAUUSD,M5</FirstTab>
        <ActiveTab>GBPCHF,M5</ActiveTab>
        <Tab $line $lead={22}>GBPCHF,M1</Tab>
        <Tab $line>WTI,M5</Tab>
        <TabArrows>
          <button aria-label="Previous tab"><Icon w={8} h={14}><path d="M7 0v14L0 7z" fill="#999" /></Icon></button>
          <button aria-label="Next tab"><Icon w={8} h={14}><path d="M1 0v14l7-7z" fill="#999" /></Icon></button>
        </TabArrows>
      </TabBar>

      <StatusBar>
        <Help>For Help, press F1</Help>
        <Cell $w={218}>M1 ULTIMATE 1</Cell>
        <Cell $w={202}>2023.03.14 13:35</Cell>
        <Cell $w={145}>O: 1.10773</Cell>
        <Cell $w={142}>H: 1.10781</Cell>
        <Cell $w={137}>L: 1.10727</Cell>
        <Cell $w={143}>C: 1.10730</Cell>
        <Cell $w={132}>V: 594</Cell>
        <Cell $w={276}>
          <Icon w={46} h={28}>
            {[0, 1, 2, 3, 4, 5, 6, 7].map((k) => (
              <g key={k}>
                <rect x={k * 6} y="0" width="4" height={19 - k * 2} fill="#5b7312" />
                <rect x={k * 6} y={20 - k * 2} width="4" height={8 + k * 2} fill="#0d3c5c" />
              </g>
            ))}
          </Icon>
          204831/116 kb
          <Resize width="30" height="30" viewBox="0 0 30 30">
            <path d="M2 30L30 2M10 30l20-20M18 30l12-12M26 30l4-4" stroke={C.shade} strokeWidth="3" />
          </Resize>
        </Cell>
      </StatusBar>
    </Page>
  );
}
